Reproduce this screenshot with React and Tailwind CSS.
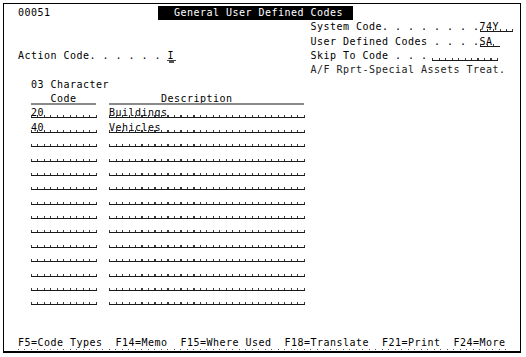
import React from 'react';

const pad = (n) => ' '.repeat(n);

function Row({ children }) {
  return <div className="h-[14.375px] leading-[14.375px] whitespace-pre">{children}</div>;
}

// underlined input field with a tick at every character cell
function Field({ width, children }) {
  return (
    <span className={`relative inline-block align-top ${width}`}>
      {children || ' '}
      <span className="absolute left-0 right-[-1px] top-[9px] h-[2px] bg-[repeating-linear-gradient(to_right,#3a3a3a_0px,#3a3a3a_1px,transparent_1px,transparent_6.5px)]" />
      <span className="absolute left-0 right-[-1px] top-[11px] h-px bg-[#1a1a1a]" />
    </span>
  );
}

function Header({ width, children }) {
  return (
    <span className={`relative inline-block align-top ${width}`}>
      {children}
      <span className="absolute left-0 right-0 top-[10.5px] h-[2px] bg-[#8a8a8a]" />
    </span>
  );
}

const rows = [
  ['20', 'Buildings'],
  ['40', 'Vehicles'],
  ...Array.from({ length: 12 }, () => ['', '']),
];

export default function App() {
  return (
    <div className="w-[526px] h-[357px] bg-white pl-[3px] pt-[3px] font-['DejaVu_Sans_Mono',monospace] text-[10px] tracking-[0.48px] text-black">
      <div className="w-[518px] h-[350px] border-l border-t border-r border-b-2 border-black pl-px pt-[1.8px]">
        <Row>
          {'  00051' + pad(16)}
          <span className="ml-[3.5px] inline-block align-top bg-black text-white pl-[16px] pr-[10px]">General User Defined Codes</span>
        </Row>
        <Row>
          {pad(47) + 'System Code. . . . . . . .'}
          <Field width="w-[32.5px]">74Y</Field>
        </Row>
        <Row>
          {pad(47) + 'User Defined Codes . . . .'}
          <Field width="w-[19.5px]">SA</Field>
        </Row>
        <Row>
          {'  Action Code. . . . . . '}
          <span className="relative inline-block align-top w-[6.5px]">
            I
            <span className="absolute left-[-1px] w-[9px] top-[11px] h-px bg-[#444]" />
            <span className="absolute left-[1px] w-[5px] top-[12px] h-[2px] bg-[#555]" />
          </span>
          {pad(21) + 'Skip To Code . . .'}
          <span className="ml-[4px] inline-block align-top">
            <Field width="w-[65px]" />
          </span>
        </Row>
        <Row>
          <span className="text-[#222]">{pad(47) + 'A/F Rprt-Special Assets Treat.'}</span>
        </Row>
        <Row>{'    03 Character'}</Row>
        <Row>
          {pad(4)}
          <Header width="w-[65px]">{'   Code'}</Header>
          {'  '}
          <Header width="w-[195px]">{pad(8) + 'Description'}</Header>
        </Row>
        {rows.map(([code, desc], i) => (
          <Row key={i}>
            {pad(4)}
            <Field width="w-[65px]">{code}</Field>
            {'  '}
            <Field width="w-[195px]">{desc}</Field>
          </Row>
        ))}
        <Row />
        <Row />
        <Row>
          {'  '}
          <span className="relative inline-block align-top">
            F5=Code Types  F14=Memo  F15=Where Used  F18=Translate  F21=Print  F24=More
            <span className="absolute left-0 right-0 top-[13px] h-px bg-[repeating-linear-gradient(to_right,#555_0px,#555_1px,transparent_1px,transparent_6.5px)]" />
          </span>
        </Row>
      </div>
    </div>
  );
}
